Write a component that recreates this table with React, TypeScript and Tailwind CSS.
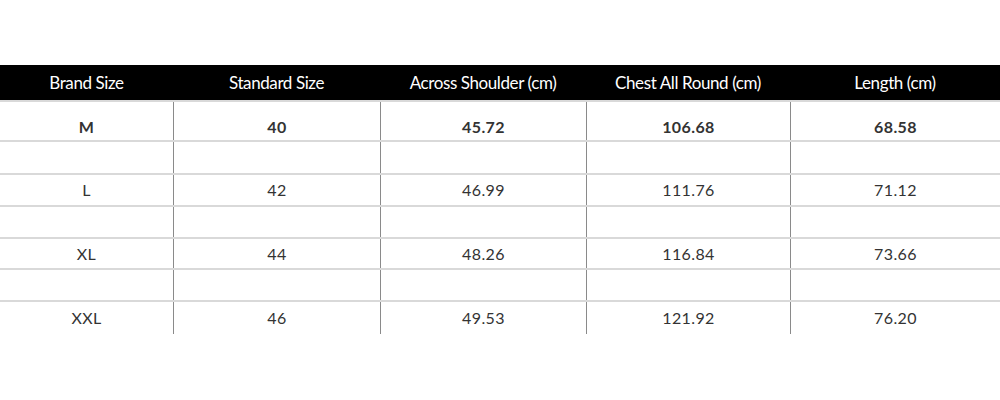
import React from "react"

const headers = [
  "Brand Size",
  "Standard Size",
  "Across Shoulder (cm)",
  "Chest All Round (cm)",
  "Length (cm)",
]

const rows = [
  ["M", "40", "45.72", "106.68", "68.58"],
  ["L", "42", "46.99", "111.76", "71.12"],
  ["XL", "44", "48.26", "116.84", "73.66"],
  ["XXL", "46", "49.53", "121.92", "76.20"],
]

// heights of [gap row, data row] after the first row
const heights = [
  ["h-[31px]", "h-[30px]"],
  ["h-[30px]", "h-[29px]"],
  ["h-[30px]", "h-[32px]"],
]

const cols = "grid grid-cols-[173px_207px_206px_204px_210px]"

const Cells = ({ items, className }: { items: string[]; className: string }) => (
  <div className={cols}>
    {items.map((item, index) => (
      <div
        key={index}
        className={`flex items-center justify-center ${index > 0 ? "border-l border-[#8a8a8a]" : ""} ${className}`}
      >
        {item}
      </div>
    ))}
  </div>
)

const App = (): JSX.Element => {
  return (
    <div className="w-[1000px] h-[400px] bg-white pt-[65px] font-['Lato',sans-serif] text-[#333]">
      <div className={`${cols} h-[35px] bg-black text-white text-[17px] tracking-[-0.4px]`}>
        {headers.map((item, index) => (
          <div key={index} className="flex items-center justify-center">
            {item}
          </div>
        ))}
      </div>
      <div className="border-t-2 border-[#d9d9d9]">
        <Cells items={rows[0]} className="h-[38px] pt-[12px] font-bold text-[16px] tracking-[0.4px]" />
      </div>
      {rows.slice(1).map((row, i) => (
        <div key={i}>
          <div className="border-t-2 border-[#d9d9d9]">
            <Cells items={["", "", "", "", ""]} className={heights[i][0]} />
          </div>
          <div className="border-t-2 border-[#d9d9d9]">
            <Cells items={row} className={`${heights[i][1]} text-[16px] tracking-[0.4px]`} />
          </div>
        </div>
      ))}
    </div>
  )
}

export default App
